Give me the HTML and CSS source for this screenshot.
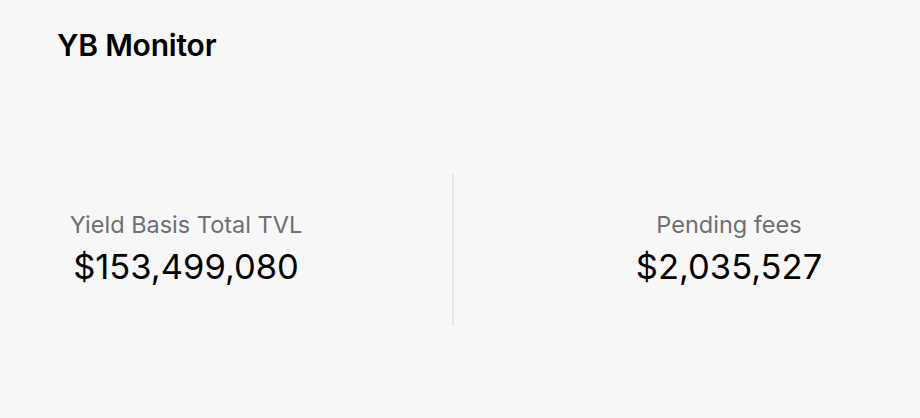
FILE: index.html
```html
<!DOCTYPE html>
<html lang="en">
<head>
  <meta charset="UTF-8" />
  <meta name="viewport" content="width=device-width, initial-scale=1.0"/>
  <title>YB Monitor</title>
  <link rel="stylesheet" href="styles.css">
</head>
<body>
  <header class="top-bar">
    <h1>YB Monitor</h1>
  </header>

  <main class="stats">
    <div class="stat stat-left">
      <div class="stat-label">Yield Basis Total TVL</div>
      <div class="stat-value">$153,499,080</div>
    </div>
    <div class="divider"></div>
    <div class="stat stat-right">
      <div class="stat-label">Pending fees</div>
      <div class="stat-value">$2,035,527</div>
    </div>
  </main>
</body>
</html>
```

FILE: styles.css
```css
body {
  margin: 0;
  background-color: #f7f7f7;
  font-family: Inter, "Noto Sans", Arial, sans-serif;
  color: #000;
}

.top-bar {
  padding: 28px 57px 0;
}

h1 {
  margin: 0;
  font-size: 30px;
  font-weight: 600;
  letter-spacing: -0.2px;
  line-height: 34px;
}

.stats {
  display: flex;
  align-items: center;
  margin-top: 112px;
}

.stat {
  text-align: center;
}

.stat-left {
  width: 372px;
  margin-right: 80px;
}

.stat-right {
  width: 366px;
  margin-left: 92px;
}

.divider {
  width: 2px;
  height: 152px;
  background-color: #e5e5ea;
}

.stat-label {
  font-size: 23.5px;
  color: #6e6e73;
  line-height: 28px;
}

.stat-value {
  font-size: 34.5px;
  line-height: 44px;
  margin-top: 6px;
}
```
